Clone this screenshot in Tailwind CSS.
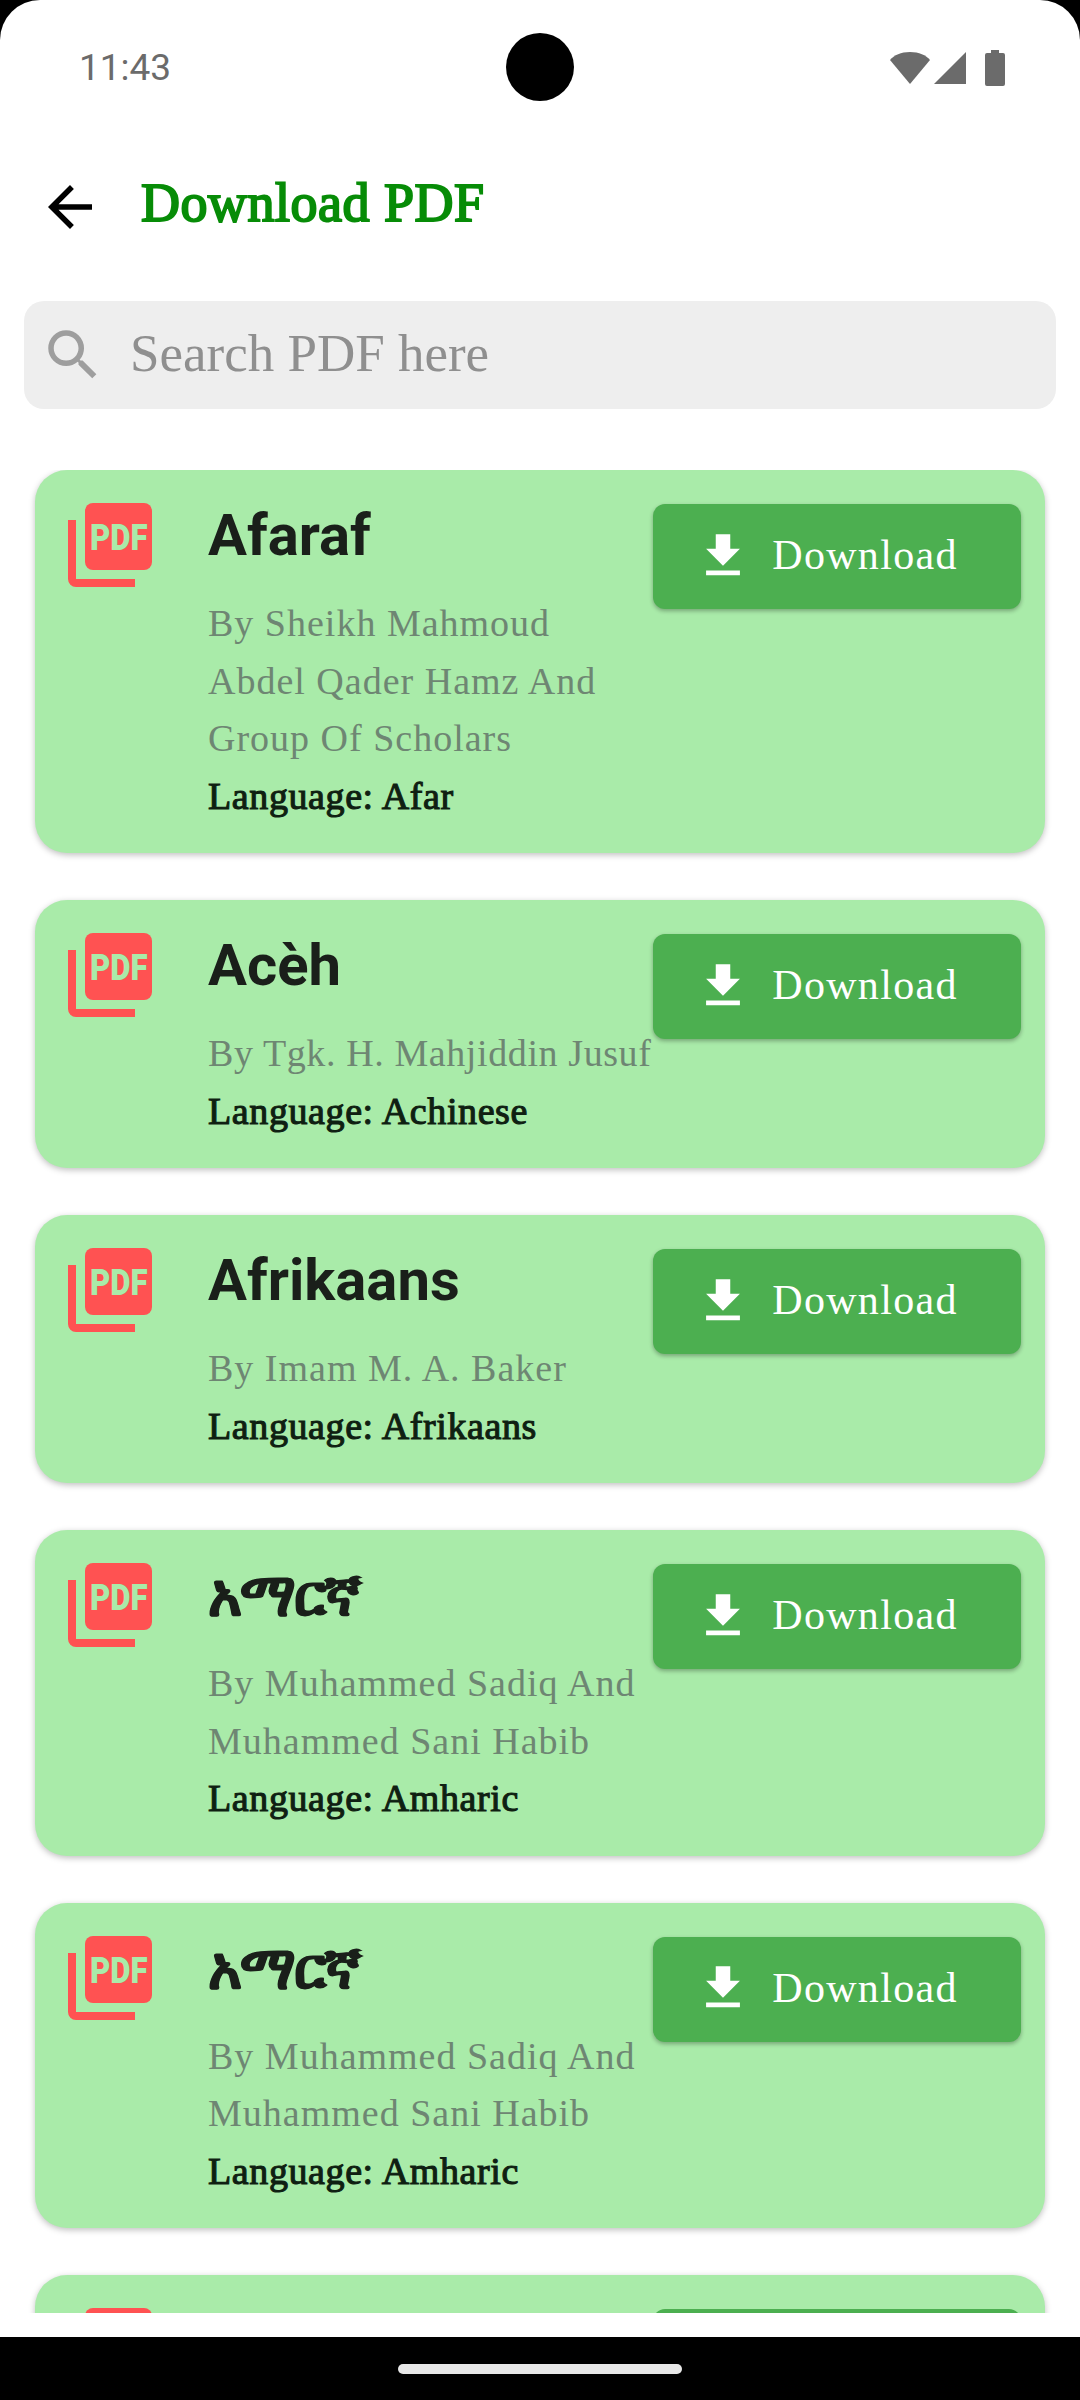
<!DOCTYPE html>
<html>
  <head>
    <title>Download PDF</title>
    <meta charset="UTF-8" />
    <meta name="viewport" content="width=device-width, initial-scale=1.0" />
    <script src="https://cdn.jsdelivr.net/npm/@tailwindcss/browser@4"></script>
  </head>
  <body class="bg-black font-['Liberation_Serif',serif]">
    <div class="flex flex-col h-[2400px] w-[1080px] overflow-hidden">
      <div class="flex flex-col h-[2337px] bg-white rounded-t-[40px] overflow-hidden">

        <!-- status bar -->
        <div class="relative flex items-center justify-between h-[136px] shrink-0 pl-[79px] pr-[75px] font-['Roboto',sans-serif] text-[37px] text-[#6b6b6b]">
          <span>11:43</span>
          <div class="absolute left-[506px] top-[33px] w-[68px] h-[68px] rounded-full bg-black"></div>
          <div class="flex items-center">
            <svg class="w-[42px] h-[34px]" viewBox="0 0 42 34"><path fill="#6b6b6b" d="M21 33 1 9C5 4 12 1 21 1s16 3 20 8z"/></svg>
            <svg class="w-[32px] h-[34px] ml-[3px]" viewBox="0 0 32 34"><path fill="#6b6b6b" d="M0 33 32 1v32z"/></svg>
            <svg class="w-[20px] h-[36px] ml-[19px]" viewBox="0 0 20 36"><path fill="#6b6b6b" d="M6 0h8v3h4a2 2 0 0 1 2 2v29a2 2 0 0 1-2 2H2a2 2 0 0 1-2-2V5a2 2 0 0 1 2-2h4z"/></svg>
          </div>
        </div>

        <!-- header -->
        <div class="flex items-center h-[148px] shrink-0 pl-[37px] mb-[17px]">
          <svg class="w-[66px] h-[66px] -mt-[6px]" viewBox="0 0 24 24"><path fill="#000" d="M20 11H7.83l5.59-5.59L12 4l-8 8 8 8 1.41-1.41L7.83 13H20v-2z"/></svg>
          <h1 class="ml-[38px] -mt-[14px] text-[54px] leading-none tracking-[0.5px] text-[#078c07] [-webkit-text-stroke:2px_#078c07]">Download PDF</h1>
        </div>

        <!-- search -->
        <div class="flex items-center h-[108px] shrink-0 mx-[24px] pl-[16px] bg-[#eeeeee] rounded-[20px]">
          <svg class="w-[66px] h-[66px]" viewBox="0 0 24 24"><path fill="#9e9e9e" d="M15.5 14h-.79l-.28-.27A6.471 6.471 0 0 0 16 9.5 6.5 6.5 0 1 0 9.5 16c1.61 0 3.09-.59 4.23-1.57l.27.28v.79l5 4.99L20.49 19l-4.99-5zm-6 0C7.01 14 5 11.99 5 9.5S7.01 5 9.5 5 14 7.01 14 9.5 11.99 14 9.5 14z"/></svg>
          <span class="ml-[24px] -mt-[2px] text-[53px] text-[#8f8f8f]">Search PDF here</span>
        </div>

        <!-- list -->
        <div class="flex flex-col gap-[47px] mt-[61px] px-[35px] h-[1843px] shrink-0 overflow-hidden">

          <div class="flex shrink-0 pl-[33px] pr-[24px] pt-[33px] pb-[28px] bg-[#a9eba9] rounded-[32px] shadow-[0_2px_6px_rgba(0,0,0,0.25)]">
            <svg class="w-[84px] h-[84px] shrink-0" viewBox="0 0 84 84"><path fill="#ff5252" d="M0 17h8v59h59v8H8a8 8 0 0 1-8-8z"/><rect x="17" width="67" height="67" rx="8" fill="#ff5252"/><text transform="translate(22 47) scale(1.04 1.23)" font-family="Roboto" font-weight="900" font-size="30" fill="#a9eba9">PDF</text></svg>
            <div class="w-[445px] ml-[56px] shrink-0">
              <h2 class="font-['Roboto','Noto_Sans','DejaVu_Sans',sans-serif] font-bold text-[58px] leading-[64px] text-[#1a1f1a]">Afaraf</h2>
              <p class="mt-[28px] text-[38px] leading-[57.5px] tracking-[1px] text-[#6e8673]">By Sheikh Mahmoud Abdel Qader Hamz And Group Of Scholars</p>
              <p class="text-[38px] leading-[57.5px] tracking-[0.6px] text-[#0f1f12] [-webkit-text-stroke:1.1px_#0f1f12]">Language: Afar</p>
            </div>
            <div class="flex items-center justify-center w-[368px] h-[105px] shrink-0 mt-[1px] pr-[22px] pb-[2px] bg-[#4caf50] rounded-[12px] shadow-[0_2px_4px_rgba(0,0,0,0.3)] text-white text-[42px] tracking-[1.3px]">
              <svg class="w-[58px] h-[58px]" viewBox="0 0 24 24"><path fill="#fff" d="M19 9h-4V3H9v6H5l7 7 7-7zM5 18v2h14v-2H5z"/></svg>
              <span class="ml-[20px]">Download</span>
            </div>
          </div>

          <div class="flex shrink-0 pl-[33px] pr-[24px] pt-[33px] pb-[28px] bg-[#a9eba9] rounded-[32px] shadow-[0_2px_6px_rgba(0,0,0,0.25)]">
            <svg class="w-[84px] h-[84px] shrink-0" viewBox="0 0 84 84"><path fill="#ff5252" d="M0 17h8v59h59v8H8a8 8 0 0 1-8-8z"/><rect x="17" width="67" height="67" rx="8" fill="#ff5252"/><text transform="translate(22 47) scale(1.04 1.23)" font-family="Roboto" font-weight="900" font-size="30" fill="#a9eba9">PDF</text></svg>
            <div class="w-[445px] ml-[56px] shrink-0">
              <h2 class="font-['Roboto','Noto_Sans','DejaVu_Sans',sans-serif] font-bold text-[58px] leading-[64px] text-[#1a1f1a]">Acèh</h2>
              <p class="mt-[28px] text-[38px] leading-[57.5px] tracking-[0.6px] whitespace-nowrap text-[#6e8673]">By Tgk. H. Mahjiddin Jusuf</p>
              <p class="text-[38px] leading-[57.5px] tracking-[0.6px] text-[#0f1f12] [-webkit-text-stroke:1.1px_#0f1f12]">Language: Achinese</p>
            </div>
            <div class="flex items-center justify-center w-[368px] h-[105px] shrink-0 mt-[1px] pr-[22px] pb-[2px] bg-[#4caf50] rounded-[12px] shadow-[0_2px_4px_rgba(0,0,0,0.3)] text-white text-[42px] tracking-[1.3px]">
              <svg class="w-[58px] h-[58px]" viewBox="0 0 24 24"><path fill="#fff" d="M19 9h-4V3H9v6H5l7 7 7-7zM5 18v2h14v-2H5z"/></svg>
              <span class="ml-[20px]">Download</span>
            </div>
          </div>

          <div class="flex shrink-0 pl-[33px] pr-[24px] pt-[33px] pb-[28px] bg-[#a9eba9] rounded-[32px] shadow-[0_2px_6px_rgba(0,0,0,0.25)]">
            <svg class="w-[84px] h-[84px] shrink-0" viewBox="0 0 84 84"><path fill="#ff5252" d="M0 17h8v59h59v8H8a8 8 0 0 1-8-8z"/><rect x="17" width="67" height="67" rx="8" fill="#ff5252"/><text transform="translate(22 47) scale(1.04 1.23)" font-family="Roboto" font-weight="900" font-size="30" fill="#a9eba9">PDF</text></svg>
            <div class="w-[445px] ml-[56px] shrink-0">
              <h2 class="font-['Roboto','Noto_Sans','DejaVu_Sans',sans-serif] font-bold text-[58px] leading-[64px] text-[#1a1f1a]">Afrikaans</h2>
              <p class="mt-[28px] text-[38px] leading-[57.5px] tracking-[1px] text-[#6e8673]">By Imam M. A. Baker</p>
              <p class="text-[38px] leading-[57.5px] tracking-[0.6px] text-[#0f1f12] [-webkit-text-stroke:1.1px_#0f1f12]">Language: Afrikaans</p>
            </div>
            <div class="flex items-center justify-center w-[368px] h-[105px] shrink-0 mt-[1px] pr-[22px] pb-[2px] bg-[#4caf50] rounded-[12px] shadow-[0_2px_4px_rgba(0,0,0,0.3)] text-white text-[42px] tracking-[1.3px]">
              <svg class="w-[58px] h-[58px]" viewBox="0 0 24 24"><path fill="#fff" d="M19 9h-4V3H9v6H5l7 7 7-7zM5 18v2h14v-2H5z"/></svg>
              <span class="ml-[20px]">Download</span>
            </div>
          </div>

          <div class="flex shrink-0 pl-[33px] pr-[24px] pt-[33px] pb-[28px] bg-[#a9eba9] rounded-[32px] shadow-[0_2px_6px_rgba(0,0,0,0.25)]">
            <svg class="w-[84px] h-[84px] shrink-0" viewBox="0 0 84 84"><path fill="#ff5252" d="M0 17h8v59h59v8H8a8 8 0 0 1-8-8z"/><rect x="17" width="67" height="67" rx="8" fill="#ff5252"/><text transform="translate(22 47) scale(1.04 1.23)" font-family="Roboto" font-weight="900" font-size="30" fill="#a9eba9">PDF</text></svg>
            <div class="w-[445px] ml-[56px] shrink-0">
              <h2 class="font-['Roboto','Noto_Sans','DejaVu_Sans',sans-serif] font-bold text-[58px] leading-[64px] tracking-[-2px] text-[#1a1f1a] [-webkit-text-stroke:1px_#1a1f1a]">አማርኛ</h2>
              <p class="mt-[28px] text-[38px] leading-[57.5px] tracking-[1px] text-[#6e8673]">By Muhammed Sadiq And Muhammed Sani Habib</p>
              <p class="text-[38px] leading-[57.5px] tracking-[0.6px] text-[#0f1f12] [-webkit-text-stroke:1.1px_#0f1f12]">Language: Amharic</p>
            </div>
            <div class="flex items-center justify-center w-[368px] h-[105px] shrink-0 mt-[1px] pr-[22px] pb-[2px] bg-[#4caf50] rounded-[12px] shadow-[0_2px_4px_rgba(0,0,0,0.3)] text-white text-[42px] tracking-[1.3px]">
              <svg class="w-[58px] h-[58px]" viewBox="0 0 24 24"><path fill="#fff" d="M19 9h-4V3H9v6H5l7 7 7-7zM5 18v2h14v-2H5z"/></svg>
              <span class="ml-[20px]">Download</span>
            </div>
          </div>

          <div class="flex shrink-0 pl-[33px] pr-[24px] pt-[33px] pb-[28px] bg-[#a9eba9] rounded-[32px] shadow-[0_2px_6px_rgba(0,0,0,0.25)]">
            <svg class="w-[84px] h-[84px] shrink-0" viewBox="0 0 84 84"><path fill="#ff5252" d="M0 17h8v59h59v8H8a8 8 0 0 1-8-8z"/><rect x="17" width="67" height="67" rx="8" fill="#ff5252"/><text transform="translate(22 47) scale(1.04 1.23)" font-family="Roboto" font-weight="900" font-size="30" fill="#a9eba9">PDF</text></svg>
            <div class="w-[445px] ml-[56px] shrink-0">
              <h2 class="font-['Roboto','Noto_Sans','DejaVu_Sans',sans-serif] font-bold text-[58px] leading-[64px] tracking-[-2px] text-[#1a1f1a] [-webkit-text-stroke:1px_#1a1f1a]">አማርኛ</h2>
              <p class="mt-[28px] text-[38px] leading-[57.5px] tracking-[1px] text-[#6e8673]">By Muhammed Sadiq And Muhammed Sani Habib</p>
              <p class="text-[38px] leading-[57.5px] tracking-[0.6px] text-[#0f1f12] [-webkit-text-stroke:1.1px_#0f1f12]">Language: Amharic</p>
            </div>
            <div class="flex items-center justify-center w-[368px] h-[105px] shrink-0 mt-[1px] pr-[22px] pb-[2px] bg-[#4caf50] rounded-[12px] shadow-[0_2px_4px_rgba(0,0,0,0.3)] text-white text-[42px] tracking-[1.3px]">
              <svg class="w-[58px] h-[58px]" viewBox="0 0 24 24"><path fill="#fff" d="M19 9h-4V3H9v6H5l7 7 7-7zM5 18v2h14v-2H5z"/></svg>
              <span class="ml-[20px]">Download</span>
            </div>
          </div>

          <div class="flex shrink-0 h-[268px] pl-[33px] pr-[24px] pt-[33px] bg-[#a9eba9] rounded-[32px] shadow-[0_2px_6px_rgba(0,0,0,0.25)]">
            <svg class="w-[84px] h-[84px] shrink-0" viewBox="0 0 84 84"><path fill="#ff5252" d="M0 17h8v59h59v8H8a8 8 0 0 1-8-8z"/><rect x="17" width="67" height="67" rx="8" fill="#ff5252"/></svg>
            <div class="w-[445px] ml-[56px] shrink-0"></div>
            <div class="w-[368px] h-[105px] shrink-0 mt-[1px] bg-[#4caf50] rounded-[12px]"></div>
          </div>
        </div>
      </div>

      <!-- nav bar -->
      <div class="flex flex-1 items-start justify-center pt-[27px] bg-black">
        <div class="w-[284px] h-[10px] rounded-full bg-[#e8e8e8]"></div>
      </div>
    </div>
  </body>
</html>
